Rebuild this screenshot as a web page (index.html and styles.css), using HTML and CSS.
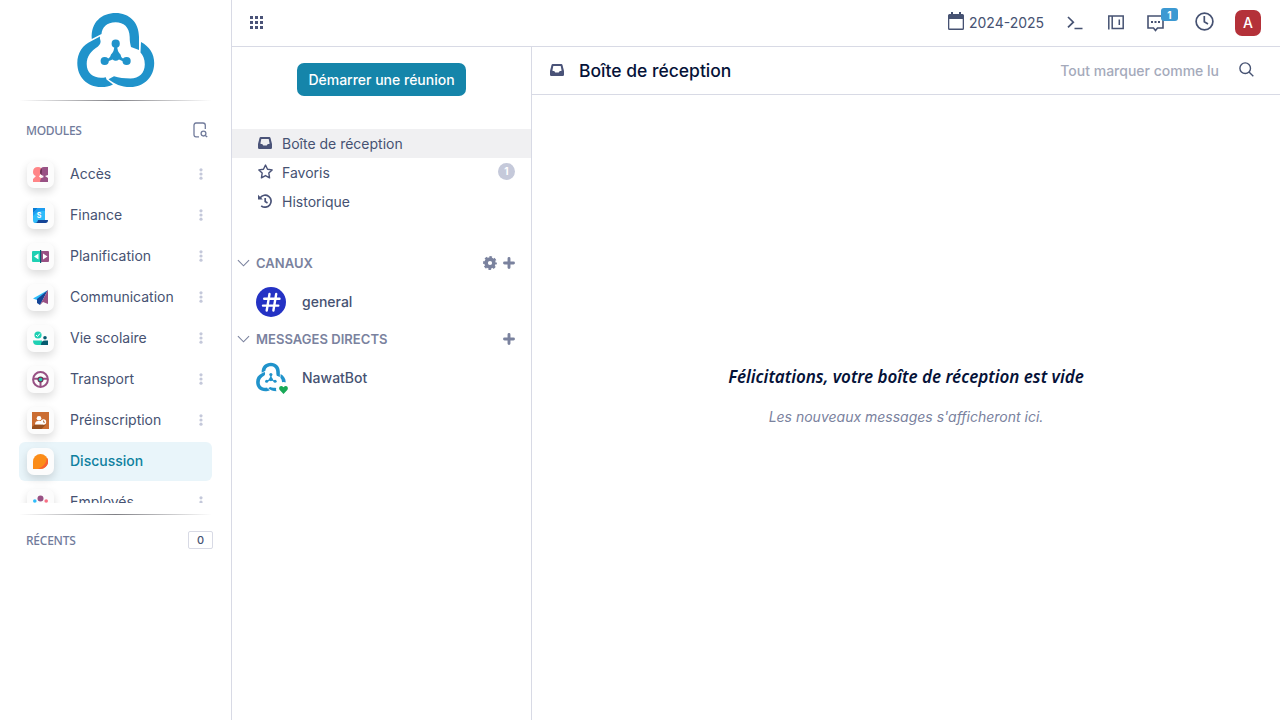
FILE: index.html
```html
<!DOCTYPE html>
<html lang="fr">
<head>
<meta charset="utf-8">
<title>Discussion</title>
<link rel="stylesheet" href="styles.css">
</head>
<body>
<svg width="0" height="0" class="defs">
  <symbol id="logo" viewBox="17 12 78 76">
    <g fill="#2093cb">
      <path d="M31.800 39C30.500 22 42 13 55.700 13C69 13 79 22 79 37V50L71 47C70 43 69.700 41 69.700 37C69.500 27 63.500 22.300 55.700 22.300C46.500 22.300 42 28 41.500 34Z"/>
      <path d="M31.500 41L40 36.500C39.500 39 40.800 40 40.600 42Q40.500 44.500 38 46.500C31 51 26.700 56 26.700 64C26.700 73 33 77.700 41 77.700Q43.500 77.700 45.800 77.200L46.500 79.500L53 84.500C49 86.500 46 87 41 87C27 87 17.300 77 17.300 63C17.300 53 22.500 45 31.500 41Z"/>
      <path d="M81 42C89.500 46.500 94.200 54 94.200 63C94.200 77 84 87 70.500 87C60.500 87 55 84 48.500 79.200L54 76.200C59 78 64 78.400 70.500 78.400C79 78.400 84.800 73 84.800 64.500C84.800 59 83 55 80.500 52.500Z"/>
    </g>
    <g fill="#2093cb"><circle cx="55.7" cy="43.700" r="4.100"/><circle cx="44.7" cy="61" r="4.100"/><circle cx="66.6" cy="61" r="4.100"/>
    <path d="M54.300 46H57.200Q57 51 60.500 54.500Q61.500 59.500 66 59.300V62.300Q62 61 59 59.500Q55.700 62 52.500 59.500Q49 61 45 62.300V59.300Q50 59 51 54.500Q54.500 51 54.300 46Z"/></g>
  </symbol>
  <symbol id="inbox" viewBox="0 0 14 12"><path fill-rule="evenodd" d="M2.700 0H11.300Q12.200 0 12.500 .9L14 7V10.700Q14 12 12.700 12H1.300Q0 12 0 10.700V7L1.500 .9Q1.800 0 2.700 0ZM3.300 2L2.400 6.500Q2.500 7 4.200 7L5.300 8.500H8.700L9.800 7Q11.500 7 11.600 6.500L10.700 2Z"/></symbol>
  <symbol id="chevron" viewBox="0 0 14 8"><path d="M1 1L7 7L13 1" fill="none" stroke="currentColor" stroke-width="1.200"/></symbol>
  <symbol id="plus" viewBox="0 0 12 12"><path d="M6 1.500V10.500M1.500 6H10.500" fill="none" stroke="currentColor" stroke-width="2.900" stroke-linecap="round"/></symbol>
  <symbol id="dots" viewBox="0 0 4 12"><g fill="#c4c8da"><circle cx="2" cy="1.800" r="1.600"/><circle cx="2" cy="6" r="1.600"/><circle cx="2" cy="10.200" r="1.600"/></g></symbol>
</svg>
<div class="app">
  <aside class="sidebar">
    <div class="brand"><svg class="brand-logo"><use href="#logo"/></svg></div>
    <div class="rule"></div>
    <div class="section-head modules-head"><span class="modules-title">MODULES</span>
      <svg width="15" height="16" viewBox="0 0 15 16" fill="none" stroke="#717b9b" stroke-width="1.300"><path d="M6 14.800H3Q1 14.800 1 12.500V3.300Q1 1 3 1H10Q12.300 1 12.300 3.300V7"/><circle cx="10.500" cy="11.600" r="2.400"/><path d="M12.300 13.400L14.200 15"/></svg>
    </div>
    <nav class="modules">
      <a class="module"><span class="tile"><svg viewBox="0 0 15 15"><path fill="#ff8587" d="M0 5Q0 0 5 0Q9 0 9 4L7.500 8.500L9 10V15H0V12L3 9Q0 8 0 5Z"/><path fill="#985184" d="M15 0H11Q7 0 7 5Q7 8 11 9Q7 11 7 15H15V11L12 9L15 8Z"/><path fill="#6d3455" d="M9 1.500Q7 2.500 7 5Q7 7 8.500 8Q9 6 9 1.500Z"/><path fill="#fff" d="M7.500 7L8.500 9.500L11 10L8 11L6 9.800Z"/></svg></span><span class="label">Accès</span><svg class="dots"><use href="#dots"/></svg></a>
      <a class="module"><span class="tile"><svg viewBox="0 0 15 15"><path fill="#2ebcfa" d="M0 0H12V15H2Q0 15 0 12Z"/><path fill="#087bd4" d="M0 0H5L0 5Z"/><path fill="#1c9cf0" d="M5 0H12V3Q7 2 3 5L0 8V5Z"/><path fill="#144496" d="M5 12H15Q15 15 12.500 15H2Q4.500 15 5 12Z"/><text x="3.700" y="10" class="coin">S</text></svg></span><span class="label">Finance</span><svg class="dots"><use href="#dots"/></svg></a>
      <a class="module"><span class="tile"><svg class="wide" viewBox="0 0 17 15"><rect y="2" width="8.500" height="11" rx="1" fill="#1fd0b3"/><rect x="8.500" y="2" width="8.500" height="11" rx="1" fill="#985184"/><path fill="#065b70" d="M8 1H9.200V14H8Z"/><path fill="#fff" d="M6.500 4.500V10.500L2 7.500ZM11 4.500V10.500L15.500 7.500Z"/></svg></span><span class="label">Planification</span><svg class="dots"><use href="#dots"/></svg></a>
      <a class="module"><span class="tile"><svg viewBox="0 0 15 15"><path fill="#2ebcfa" d="M15 0L0 8.500L4 10Z"/><path fill="#144496" d="M15 0L4 9V13L7 15Z"/><path fill="#985184" d="M15 0V14L10 12L7 15Z"/></svg></span><span class="label">Communication</span><svg class="dots"><use href="#dots"/></svg></a>
      <a class="module"><span class="tile"><svg viewBox="0 0 15 15"><circle cx="5" cy="4" r="3.600" fill="#1fd0b3"/><path d="M3 4L4.500 5.500L7 2.500" stroke="#fff" fill="none"/><circle cx="12" cy="6.800" r="1.800" fill="#065b70"/><path fill="#1fd0b3" d="M0 9.500H9V14H4Q0 14 0 9.500Z"/><path fill="#065b70" d="M8 14Q8 9.500 12 9.500H15V14Z"/></svg></span><span class="label">Vie scolaire</span><svg class="dots"><use href="#dots"/></svg></a>
      <a class="module"><span class="tile"><svg class="wide" viewBox="0 0 17 17"><g fill="none" stroke="#985184" stroke-width="2"><circle cx="8.500" cy="8.500" r="7.400"/><path d="M1.500 7.800H15.500M8.500 9V16"/></g><circle cx="8.500" cy="8.500" r="3" fill="#6d3455"/><circle cx="8.500" cy="8.500" r="1.800" fill="#1fd0b3"/></svg></span><span class="label">Transport</span><svg class="dots"><use href="#dots"/></svg></a>
      <a class="module"><span class="tile"><svg class="wide" viewBox="0 0 17 17"><path fill="#cb6d32" d="M0 0H17V17H0Z"/><path fill="#98501f" d="M3 12.500H14L9.500 17H0V15Z"/><circle cx="7" cy="6.200" r="2.300" fill="#fff"/><path fill="#fff" d="M3 12.500Q3 9 6 9H10V12.500Z"/><circle cx="11.500" cy="10" r="2.700" fill="#fff"/><path d="M11.500 8.500V10.200H13" fill="none" stroke="#a85e2d" stroke-width=".8"/></svg></span><span class="label">Préinscription</span><svg class="dots"><use href="#dots"/></svg></a>
      <a class="module active"><span class="tile"><svg viewBox="0 0 15 15"><path fill="#fb8c18" d="M0 15V7.500A7.500 7.500 0 1 1 7.500 15Z"/><path fill="#f96031" d="M14 3.800Q17 9 12.500 13Q10 15 7 15H5Q13 12 14 3.800Z"/></svg></span><span class="label">Discussion</span></a>
      <a class="module"><span class="tile"><svg viewBox="0 0 15 15"><circle cx="7.500" cy="3.500" r="3" fill="#985184"/><circle cx="1.800" cy="6" r="1.800" fill="#2ebcfa"/><circle cx="13.200" cy="6" r="1.800" fill="#f86f83"/></svg></span><span class="label">Employés</span><svg class="dots"><use href="#dots"/></svg></a>
    </nav>
    <div class="rule lower"></div>
    <div class="section-head recents"><span class="recents-title">RÉCENTS</span><span class="count">0</span></div>
  </aside>
  <div class="main">
    <header class="topbar">
      <svg width="13" height="13" viewBox="0 0 13 13" fill="#4a5378"><path d="M0 0h3v3H0zM5 0h3v3H5zM10 0h3v3h-3zM0 5h3v3H0zM5 5h3v3H5zM10 5h3v3h-3zM0 10h3v3H0zM5 10h3v3H5zM10 10h3v3h-3z"/></svg>
      <div class="tools">
        <svg class="calendar" width="16" height="18" viewBox="0 0 16 18"><path fill="#465272" fill-rule="evenodd" d="M3 0H5V2H11V0H13V2H14.500Q16 2 16 3.500V16.500Q16 18 14.500 18H1.500Q0 18 0 16.500V3.500Q0 2 1.500 2H3ZM1.300 7V16.600H14.700V7Z"/></svg>
        <span class="year">2024-2025</span>
        <svg class="terminal" width="16" height="14" viewBox="0 0 16 14" fill="none" stroke="#465272" stroke-width="1.700"><path d="M1 1L6.300 6.200L1 11.400M7.500 12.500H15.500"/></svg>
        <svg class="book" width="16" height="15" viewBox="0 0 16 15" fill="none" stroke="#465272" stroke-width="1.500"><path d="M.8 14.500V1H15.200V13.500H4.200V1M11.300 4.500V10"/></svg>
        <span class="chat"><svg width="17" height="17" viewBox="0 0 17 17"><path d="M1 1H16V13H10.500L8.500 15.500L6.500 13H1Z" fill="none" stroke="#465272" stroke-width="1.600"/><path fill="#465272" d="M4 6h2v2H4zM7.500 6h2v2h-2zM11 6h2v2h-2z"/></svg><b>1</b></span>
        <svg class="clock" width="19" height="19" viewBox="0 0 19 19" fill="none" stroke="#465272" stroke-width="1.700"><circle cx="9.500" cy="9.500" r="8.400"/><path d="M9.300 4V9.800L13 12"/></svg>
        <span class="avatar">A</span>
      </div>
    </header>
    <div class="workspace">
      <section class="channels">
        <button class="meeting">Démarrer une réunion</button>
        <div class="boxes">
          <div class="box selected"><svg width="14" height="12" fill="#4a5378"><use href="#inbox"/></svg><span>Boîte de réception</span></div>
          <div class="box"><svg width="15" height="15" viewBox="0 0 14 14"><path d="M7 1L8.900 4.900L13.200 5.500L10.100 8.500L10.800 12.900L7 10.800L3.200 12.900L3.900 8.500L.8 5.500L5.100 4.900Z" fill="none" stroke="#4a5378" stroke-width="1.300" stroke-linejoin="round"/></svg><span>Favoris</span><b class="bubble">1</b></div>
          <div class="box"><svg width="14" height="14" viewBox="0 0 14 14"><path d="M2.200 3.700A6 6 0 1 1 3.200 11.800M7.200 4V7.600L9.500 9" fill="none" stroke="#4a5378" stroke-width="1.700"/><path fill="#4a5378" d="M0 .8V5.500H4.800Z"/></svg><span>Historique</span></div>
        </div>
        <div class="category"><svg width="14" height="8"><use href="#chevron"/></svg><span>CANAUX</span><svg class="gear" width="14" height="14" viewBox="0 0 14 14"><circle cx="7" cy="7" r="3.900" fill="none" stroke="#7a829e" stroke-width="3.600"/><circle cx="7" cy="7" r="5.900" fill="none" stroke="#7a829e" stroke-width="2" stroke-dasharray="2.600 2.034" stroke-dashoffset="1.300"/></svg><svg width="12" height="12"><use href="#plus"/></svg></div>
        <div class="thread"><span class="thread-icon"><svg class="hash" viewBox="0 0 30 30"><circle cx="15" cy="15" r="15" fill="#2432c4"/><path d="M13.500 7L10.700 23.500M20.200 7L17.400 23.500M8.200 11.800H23.500M7 18.600H22.300" stroke="#fff" stroke-width="2.400" stroke-linecap="round"/></svg></span><span>general</span></div>
        <div class="category"><svg width="14" height="8"><use href="#chevron"/></svg><span>MESSAGES DIRECTS</span><svg class="push" width="12" height="12"><use href="#plus"/></svg></div>
        <div class="thread direct"><span class="thread-icon"><svg class="bot"><use href="#logo"/></svg><svg class="heart" viewBox="0 0 15 15"><circle cx="7.500" cy="7.500" r="7.500" fill="#fff"/><path fill="#18a957" d="M7.500 12L3.500 7.800Q2.500 6 3.800 4.600Q5.500 3.300 7.500 5.300Q9.500 3.300 11.200 4.600Q12.500 6 11.500 7.800Z"/></svg></span><span>NawatBot</span></div>
      </section>
      <section class="content">
        <header class="content-head"><svg class="head-icon" width="14" height="12" fill="#4a5378"><use href="#inbox"/></svg><h1>Boîte de réception</h1><span class="mark">Tout marquer comme lu</span><svg class="search" width="15" height="15" viewBox="0 0 15 15" fill="none" stroke="#465272" stroke-width="1.400"><circle cx="6.200" cy="6.200" r="5.300"/><path d="M10 10L14.300 14.300"/></svg></header>
        <div class="empty"><h2>Félicitations, votre boîte de réception est vide</h2><p>Les nouveaux messages s'afficheront ici.</p></div>
      </section>
    </div>
  </div>
</div>
</body>
</html>
```
FILE: styles.css
```css
* { box-sizing: border-box; }
body { margin: 0; font-family: Inter, sans-serif; font-size: 14px; color: #465272; background: #fff; }
svg { display: block; flex-shrink: 0; }
.defs { position: absolute; }
.app { display: flex; width: 1280px; height: 720px; overflow: hidden; }
.sidebar { width: 232px; flex-shrink: 0; border-right: 1px solid #d8dae5; }
.brand { height: 100px; padding-top: 12px; }
.brand-logo { width: 78px; height: 76px; margin-left: 77px; }
.rule { height: 1px; margin: 0 19px; background: linear-gradient(90deg, transparent, #808085, transparent); }
.section-head { display: flex; align-items: center; justify-content: space-between; font-family: "Noto Sans", sans-serif; font-size: 12px; font-weight: 500; color: #717b9b; }
.modules-head { height: 54px; padding: 5px 23px 0 26px; }
.modules-head svg { margin-top: -2px; }
.modules-title { letter-spacing: -.3px; }
.modules { height: 348px; overflow: hidden; }
.module { display: flex; align-items: center; height: 39px; margin: 0 19px 2px; padding: 0 8px; border-radius: 6px; }
.modules .active { background: #e9f5fa; color: #0e809e; font-weight: 500; }
.tile { display: flex; align-items: center; justify-content: center; width: 27px; height: 27px; margin-right: 16px; border-radius: 7px; background: #fcfcfc; box-shadow: 0 4px 9px rgba(0,0,0,.14); }
.tile svg { width: 15px; height: 15px; }
.tile .wide { width: 17px; height: 17px; }
.coin { font: bold 7px Inter, sans-serif; fill: #fff; }
.label { flex: 1; padding-bottom: 2px; }
.dots { width: 4px; height: 12px; margin: -1px 1px 1px 0; }
.lower { margin-top: 11px; }
.recents { height: 50px; padding: 0 18px 0 26px; }
.recents-title { letter-spacing: -.25px; }
.count { width: 25px; height: 18px; border: 1px solid #d8dae5; border-radius: 2px; text-align: center; font: 500 11px/17px Inter, sans-serif; color: #465272; }
.main { flex: 1; min-width: 0; display: flex; flex-direction: column; }
.topbar { display: flex; align-items: center; height: 47px; border-bottom: 1px solid #d8dae5; padding: 0 19px 1px 18px; }
.tools { display: flex; align-items: center; margin-left: auto; }
.calendar { margin: -4px 5px 0 0; }
.year { width: 75px; white-space: nowrap; }
.terminal { margin-left: 23px; }
.book { margin-left: 25px; }
.chat { position: relative; margin-left: 23px; }
.chat svg { margin-top: 1px; }
.chat b { position: absolute; left: 14px; top: -6px; width: 17px; height: 13px; border-radius: 3px; background: #3c99d2; color: #fff; font-size: 10px; line-height: 14px; text-align: center; }
.clock { margin: -3px 21px 0 31px; }
.avatar { width: 26px; height: 26px; border-radius: 7px; background: #b43139; color: #fff; font-weight: 500; line-height: 26px; text-align: center; }
.workspace { display: flex; flex: 1; min-height: 0; }
.channels { display: flex; flex-direction: column; width: 300px; border-right: 1px solid #d8dae5; padding-top: 16px; }
.meeting { align-self: center; width: 169px; height: 33px; padding: 0; border: 0; border-radius: 7px; background: #1585aa; color: #fff; font: 500 14px Inter, sans-serif; white-space: nowrap; }
.boxes { margin: 33px 0 32px; }
.box { display: flex; align-items: center; height: 29px; padding: 0 16px 0 26px; }
.box > svg { margin-top: -2px; }
.box > svg + span { margin-left: 10px; }
.box > svg[width="15"] { margin-right: -1px; }
.selected { background: #f0f0f2; }
.bubble { width: 17px; height: 17px; margin: -3px 0 0 auto; border-radius: 50%; background: #c5c9da; color: #fff; font-size: 10px; line-height: 16px; text-align: center; }
.category { display: flex; align-items: center; gap: 6px; height: 30px; padding: 0 16.5px 0 5px; color: #7a829e; font-size: 13px; font-weight: 600; letter-spacing: .04px; }
.gear, .push { margin-left: auto; }
.category svg:first-child { width: 13px; }
.thread { display: flex; align-items: center; gap: 16px; height: 46px; padding: 1px 24px 0; font-weight: 500; }
.thread-icon { position: relative; width: 30px; height: 30px; }
.direct .thread-icon { margin-top: -2px; }
.hash, .bot { width: 30px; height: 30px; }
.heart { position: absolute; left: 20px; top: 20px; width: 15px; height: 15px; }
.content { flex: 1; display: flex; flex-direction: column; }
.content-head { display: flex; align-items: center; height: 48px; border-bottom: 1px solid #d8dae5; padding: 0 26px 0 18px; }
.head-icon { margin-top: -1px; }
h1 { margin: 0 0 1px 15px; font-size: 17.5px; font-weight: 500; color: #051238; }
.mark { margin: 0 20px 0 auto; color: #a5aabb; font-weight: 500; }
.search { margin-top: -3px; }
.empty { flex: 1; display: flex; flex-direction: column; align-items: center; padding-top: 271px; font-style: italic; }
h2 { margin: 0; font: italic 600 17px/22px "Noto Sans", sans-serif; letter-spacing: -.02px; color: #051238; }
p { margin: 20px 0 0; line-height: 18px; color: #7a829e; }
```
